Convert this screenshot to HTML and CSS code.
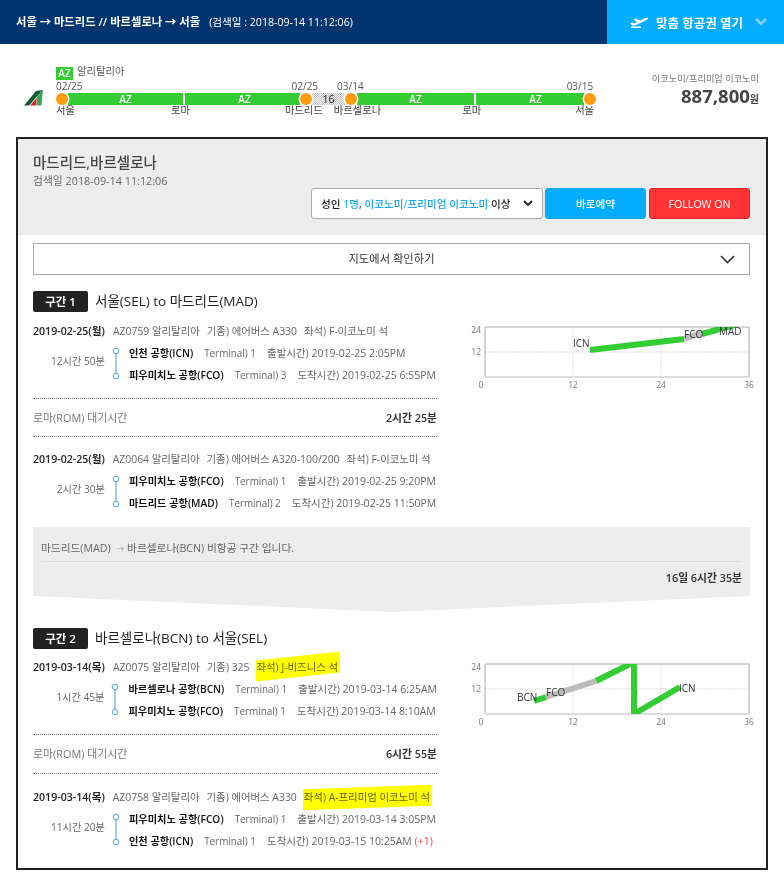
FILE: index.html
```html
<!DOCTYPE html>
<html lang="ko">
<head>
<meta charset="utf-8">
<title>항공권</title>
<link rel="stylesheet" href="styles.css">
</head>
<body>
<header class="topbar">
  <div class="route">서울 → 마드리드 // 바르셀로나 → 서울<span class="route-date">(검색일 : 2018-09-14 11:12:06)</span></div>
  <button class="open-btn">
    <svg class="plane" viewBox="0 0 18 11" width="18" height="11"><path fill="#fff" d="M0 6.5 2 5.6 4 6.4 7 5.2 3.6 2.2 5.2 1.6 10.4 3.6 14 1.6C15.5.9 17.3.4 18 .9 18.3 1.8 17 2.8 15.5 3.6L5.2 8.4 2.4 8.4ZM1 9.4H11V11H1Z"/></svg>
    <span>맞춤 항공권 열기</span>
    <svg class="chev" viewBox="0 0 12 8" width="12" height="8"><path fill="none" stroke="#7fd5ff" stroke-width="2.6" d="M1 1 6 6 11 1"/></svg>
  </button>
</header>

<section class="summary">
  <svg class="logo" viewBox="0 0 20 16" width="20" height="16">
    <polygon fill="#0f5c34" points="0,15.5 12,1 19,0 17,2 5,15.5"/>
    <polygon fill="#3aa655" points="13,7 19,0 17.4,15.5 12.6,15.5"/>
    <polygon fill="#d8262c" points="6,15.5 12.6,8 12.2,15.5"/>
  </svg>
  <div class="timeline">
    <div class="carrier"><span class="az-tag">AZ</span><span>알리탈리아</span></div>
    <div class="dates"><span class="d1">02/25</span><span class="d2">02/25</span><span class="d3">03/14</span><span class="d4">03/15</span></div>
    <div class="track">
      <span class="dot"></span>
      <span class="seg s1">AZ</span><span class="seg s2">AZ</span>
      <span class="dot"></span>
      <span class="stay">16</span>
      <span class="dot"></span>
      <span class="seg s3">AZ</span><span class="seg s4">AZ</span>
      <span class="dot"></span>
    </div>
    <div class="stations"><span class="st1">서울</span><span class="st2">로마</span><span class="st3">마드리드</span><span class="st4">바르셀로나</span><span class="st5">로마</span><span class="st6">서울</span></div>
  </div>
  <div class="price">
    <div class="cabin">이코노미/프리미엄 이코노미</div>
    <div class="amount">887,800<small>원</small></div>
  </div>
</section>

<main class="panel">
  <div class="panel-head">
    <h1>마드리드,바르셀로나</h1>
    <p class="search-date">검색일 2018-09-14 11:12:06</p>
    <div class="actions">
      <div class="select"><span>성인 <b class="blue">1명</b>, <b class="blue">이코노미/프리미엄 이코노미</b> 이상</span>
        <svg viewBox="0 0 10 7" width="10" height="7"><path fill="none" stroke="#222" stroke-width="1.8" d="M1 1 5 5 9 1"/></svg>
      </div>
      <button class="btn btn-blue">바로예약</button>
      <button class="btn btn-red">FOLLOW ON</button>
    </div>
  </div>

  <div class="panel-body">
    <div class="map-toggle"><span>지도에서 확인하기</span>
      <svg viewBox="0 0 15 9" width="15" height="9"><path fill="none" stroke="#333" stroke-width="1.6" d="M1 1 7.5 7.5 14 1"/></svg>
    </div>

    <h2 class="leg-title"><span class="badge">구간 1</span><span class="leg-name">서울(SEL) to 마드리드(MAD)</span></h2>
    <div class="leg">
      <div class="flights">
        <article class="flight">
          <div class="flight-line"><b>2019-02-25(월)</b><span class="meta">AZ0759 알리탈리아</span><span class="meta">기종) 에어버스 A330</span><span class="meta">좌석) F-이코노미 석</span></div>
          <div class="flight-body">
            <div class="dur">12시간 50분</div>
            <svg class="rail" viewBox="0 0 8 32" width="8" height="32"><path fill="none" stroke="#4aa8dc" stroke-width="1.1" d="M4 7V26"/><circle cx="4" cy="4" r="2.8" fill="#fff" stroke="#4aa8dc"/><circle cx="4" cy="29" r="2.8" fill="#fff" stroke="#4aa8dc"/></svg>
            <div class="stops">
              <div class="stop"><b>인천 공항(ICN)</b><span>Terminal) 1</span><span>출발시간) 2019-02-25 2:05PM</span></div>
              <div class="stop"><b>피우미치노 공항(FCO)</b><span>Terminal) 3</span><span>도착시간) 2019-02-25 6:55PM</span></div>
            </div>
          </div>
        </article>
        <div class="layover"><span>로마(ROM) 대기시간</span><b>2시간 25분</b></div>
        <article class="flight">
          <div class="flight-line"><b>2019-02-25(월)</b><span class="meta">AZ0064 알리탈리아</span><span class="meta">기종) 에어버스 A320-100/200</span><span class="meta">좌석) F-이코노미 석</span></div>
          <div class="flight-body">
            <div class="dur">2시간 30분</div>
            <svg class="rail" viewBox="0 0 8 32" width="8" height="32"><path fill="none" stroke="#4aa8dc" stroke-width="1.1" d="M4 7V26"/><circle cx="4" cy="4" r="2.8" fill="#fff" stroke="#4aa8dc"/><circle cx="4" cy="29" r="2.8" fill="#fff" stroke="#4aa8dc"/></svg>
            <div class="stops">
              <div class="stop"><b>피우미치노 공항(FCO)</b><span>Terminal) 1</span><span>출발시간) 2019-02-25 9:20PM</span></div>
              <div class="stop"><b>마드리드 공항(MAD)</b><span>Terminal) 2</span><span>도착시간) 2019-02-25 11:50PM</span></div>
            </div>
          </div>
        </article>
      </div>
      <svg class="chart" viewBox="0 0 295 80" width="295" height="80">
        <defs><clipPath id="plot1"><rect x="20" y="7" width="264" height="50"/></clipPath></defs>
        <g class="grid"><path d="M108 7V57M196 7V57M20 32H284"/></g>
        <path class="frame" d="M20 57V7H284V57"/><path class="axis" d="M20 57H284"/>
        <g clip-path="url(#plot1)"><path class="g" d="M125 30 219 19"/><path class="w" d="M219 19 237 13"/><path class="g" d="M237 14 258 8 270 5"/></g>
        <text class="lab" x="108" y="27">ICN</text><text class="lab" x="219" y="18">FCO</text><text class="lab" x="254" y="15">MAD</text>
        <text class="tick" x="16" y="13" text-anchor="end">24</text><text class="tick" x="16" y="35" text-anchor="end">12</text>
        <text class="tick" x="16" y="68" text-anchor="middle">0</text><text class="tick" x="108" y="68" text-anchor="middle">12</text><text class="tick" x="196" y="68" text-anchor="middle">24</text><text class="tick" x="284" y="68" text-anchor="middle">36</text>
      </svg>
    </div>

    <div class="transfer">
      <p class="transfer-note">마드리드(MAD) &nbsp;<span class="arrow">→</span> 바르셀로나(BCN) 비항공 구간 입니다.</p>
      <p class="transfer-time">16일 6시간 35분</p>
    </div>

    <h2 class="leg-title"><span class="badge">구간 2</span><span class="leg-name">바르셀로나(BCN) to 서울(SEL)</span></h2>
    <div class="leg leg-return">
      <div class="flights">
        <article class="flight">
          <div class="flight-line"><b>2019-03-14(목)</b><span class="meta">AZ0075 알리탈리아</span><span class="meta">기종) 325</span><span class="meta mark mark-a">좌석) J-비즈니스 석</span></div>
          <div class="flight-body">
            <div class="dur">1시간 45분</div>
            <svg class="rail" viewBox="0 0 8 32" width="8" height="32"><path fill="none" stroke="#4aa8dc" stroke-width="1.1" d="M4 7V26"/><circle cx="4" cy="4" r="2.8" fill="#fff" stroke="#4aa8dc"/><circle cx="4" cy="29" r="2.8" fill="#fff" stroke="#4aa8dc"/></svg>
            <div class="stops">
              <div class="stop"><b>바르셀로나 공항(BCN)</b><span>Terminal) 1</span><span>출발시간) 2019-03-14 6:25AM</span></div>
              <div class="stop"><b>피우미치노 공항(FCO)</b><span>Terminal) 1</span><span>도착시간) 2019-03-14 8:10AM</span></div>
            </div>
          </div>
        </article>
        <div class="layover"><span>로마(ROM) 대기시간</span><b>6시간 55분</b></div>
        <article class="flight">
          <div class="flight-line"><b>2019-03-14(목)</b><span class="meta">AZ0758 알리탈리아</span><span class="meta">기종) 에어버스 A330</span><span class="meta mark mark-b">좌석) A-프리미엄 이코노미 석</span></div>
          <div class="flight-body">
            <div class="dur">11시간 20분</div>
            <svg class="rail" viewBox="0 0 8 32" width="8" height="32"><path fill="none" stroke="#4aa8dc" stroke-width="1.1" d="M4 7V26"/><circle cx="4" cy="4" r="2.8" fill="#fff" stroke="#4aa8dc"/><circle cx="4" cy="29" r="2.8" fill="#fff" stroke="#4aa8dc"/></svg>
            <div class="stops">
              <div class="stop"><b>피우미치노 공항(FCO)</b><span>Terminal) 1</span><span>출발시간) 2019-03-14 3:05PM</span></div>
              <div class="stop"><b>인천 공항(ICN)</b><span>Terminal) 1</span><span>도착시간) 2019-03-15 10:25AM <em>(+1)</em></span></div>
            </div>
          </div>
        </article>
      </div>
      <svg class="chart" viewBox="0 0 295 80" width="295" height="80">
        <defs><clipPath id="plot2"><rect x="20" y="7" width="264" height="50"/></clipPath></defs>
        <g class="grid"><path d="M108 7V57M196 7V57M20 32H284"/></g>
        <path class="frame" d="M20 57V7H284V57"/><path class="axis" d="M20 57H284"/>
        <g clip-path="url(#plot2)"><path class="g" d="M69 44 81 40"/><path class="w" d="M81 40 131 24"/><path class="g" d="M131 24 169 5V57L215 30"/></g>
        <text class="lab" x="52" y="44">BCN</text><text class="lab" x="81" y="39">FCO</text><text class="lab" x="214" y="35">ICN</text>
        <text class="tick" x="16" y="13" text-anchor="end">24</text><text class="tick" x="16" y="35" text-anchor="end">12</text>
        <text class="tick" x="16" y="68" text-anchor="middle">0</text><text class="tick" x="108" y="68" text-anchor="middle">12</text><text class="tick" x="196" y="68" text-anchor="middle">24</text><text class="tick" x="284" y="68" text-anchor="middle">36</text>
      </svg>
    </div>
  </div>
</main>
</body>
</html>
```
FILE: styles.css
```css
* { box-sizing: border-box; }
html, body { margin: 0; padding: 0; }
body {
  width: 784px;
  height: 888px;
  overflow: hidden;
  background: #fff;
  color: #555;
  font: 10px/14px "Open Sans", "Noto Sans CJK KR", sans-serif;
}
p, h1, h2 { margin: 0; font-weight: 400; }
b { font-weight: 600; color: #222; }

.topbar {
  height: 44px;
  background: #00356f;
  display: flex;
  justify-content: space-between;
  align-items: center;
  padding-left: 16px;
  color: #fff;
}
.route { font-size: 11.3px; font-weight: 600; }
.route-date { font-size: 10.6px; font-weight: 400; margin-left: 9px; }
.open-btn {
  width: 177px;
  height: 44px;
  border: 0;
  background: #04adff;
  color: #fff;
  font: 600 12.5px "Open Sans", "Noto Sans CJK KR", sans-serif;
  display: flex;
  align-items: center;
  padding: 0 17px 0 23px;
}
.plane { margin-right: 8px; }
.chev { margin-left: auto; }

.summary {
  height: 93px;
  padding: 21px 25px 0 24px;
  display: flex;
}
.logo { margin: 25px 12px 0 0; flex: none; }
.timeline { width: 540px; font-size: 10.3px; line-height: 12px; color: #555; }
.carrier { display: flex; align-items: flex-start; gap: 4px; height: 15px; }
.az-tag { background: #33cc33; color: #fff; font-weight: 600; width: 17px; height: 13px; margin-top: 2px; line-height: 13px; text-align: center; font-size: 10px; }
.dates { display: flex; height: 12px; font-size: 10px; }
.d2 { margin-left: 209px; }
.d3 { margin-left: 19px; }
.d4 { margin-left: 203px; }
.track { display: flex; align-items: center; height: 13px; }
.dot {
  width: 12px; height: 12px;
  flex: none;
  border-radius: 50%;
  background: #ff9c12;
  box-shadow: 0 0 0 1.5px #fff;
  position: relative;
  z-index: 1;
}
.seg {
  height: 12px; line-height: 12px;
  background: #33cc33; color: #fff;
  font-weight: 600; font-size: 10px;
  text-align: center;
}
.s1 { width: 115px; margin-right: 2px; }
.s2 { width: 115px; padding-left: 4px; }
.s3 { width: 117px; margin-right: 2px; }
.s4 { width: 108px; padding-left: 11px; }
.stay {
  width: 33px; height: 12px; line-height: 12px;
  text-align: center; color: #222; font-size: 10.5px;
  background: repeating-conic-gradient(#c4c4c4 0 25%, #f2f2f2 0 50%) 0 0 / 2px 2px;
}
.stations { display: flex; height: 12px; font-size: 10.3px; line-height: 10px; color: #444; white-space: nowrap; }
.stations span { flex: none; }
.st2 { margin-left: 96px; }
.st3 { margin-left: 95px; }
.st4 { margin-left: 11px; }
.st5 { margin-left: 81px; }
.st6 { margin-left: 94px; }
.price { margin-left: auto; text-align: right; padding-top: 8px; white-space: nowrap; }
.cabin { font-size: 9.2px; line-height: 12px; color: #777; }
.amount { font-size: 18.5px; line-height: 22px; font-weight: 700; color: #444; }
.amount small { font-size: 10px; font-weight: 600; }

.panel {
  margin: 0 16px;
  width: 752px;
  height: 733px;
  border: 2px solid #222;
}
.panel-head {
  height: 96px;
  background: #ededed;
  padding: 15px 16px 0 15px;
}
h1 { font-size: 14.5px; line-height: 18px; color: #444; font-weight: 500; }
.search-date { font-size: 10.8px; line-height: 14px; color: #666; margin-top: 2px; }
.actions { display: flex; justify-content: flex-end; gap: 3px; height: 31px; }
.select {
  width: 232px;
  margin-right: -1px;
  background: #fff;
  border: 1px solid #aaa;
  border-radius: 3px;
  display: flex; align-items: center; justify-content: space-between;
  padding: 0 9px;
  font-size: 10.6px; color: #222; font-weight: 500;
  white-space: nowrap;
}
.blue { color: #18a8f0; font-weight: 500; }
.btn {
  width: 101px; height: 31px;
  border: 1px solid transparent; border-radius: 3px;
  color: #fff;
  font: 500 10.6px "Open Sans", "Noto Sans CJK KR", sans-serif;
}
.btn-blue { background: #04adff; border-color: #1aa3e8; }
.btn-red { background: #ff3333; border-color: #d9262c; }

.panel-body { padding: 8px 16px 0 15px; }
.map-toggle {
  height: 32px;
  border: 1px solid #aaa;
  display: flex; align-items: center; justify-content: center;
  position: relative;
  font-size: 11.3px; color: #333;
}
.map-toggle svg { position: absolute; right: 14px; top: 11px; }

.leg-title {
  display: flex; align-items: center;
  height: 21px;
  margin-top: 16px;
  font-size: 13.5px;
  color: #222;
}
.leg-name { padding-bottom: 2px; }
.badge {
  width: 55px; height: 21px; line-height: 21px;
  background: #222; color: #fff;
  border-radius: 2px;
  text-align: center;
  font-size: 11.5px; font-weight: 600;
  margin-right: 7px;
}
.leg { display: flex; }
.flights { width: 404px; flex: none; }
.chart { flex: none; margin: 8px 0 0 28px; overflow: visible; }

.flight { padding-top: 15px; }
.flight:first-child { padding-top: 12px; }
.leg-return .flight:first-child { padding-top: 11px; }
.leg-return .flight:last-child { padding-top: 16px; }
.flight-line { display: flex; height: 14px; line-height: 14px; font-size: 10.4px; color: #666; white-space: nowrap; }
.flight-line b { width: 72px; margin-right: 8px; font-size: 10.6px; }
.meta { margin-right: 7px; position: relative; }
.flight-body { display: flex; margin-top: 8px; }
.dur { width: 72px; text-align: right; align-self: center; font-size: 10.2px; color: #666; margin-top: -7px; }
.rail { margin: 1px 9px 0 7px; flex: none; }
.stops { flex: 1; display: flex; flex-direction: column; gap: 8px; }
.stop { display: flex; height: 14px; line-height: 14px; white-space: nowrap; font-size: 10.5px; color: #666; }
.stop b { margin-right: 11px; font-size: 10.2px; color: #111; }
.stop span:nth-child(2) { margin-right: 11px; font-size: 9.9px; }
em { font-style: normal; color: #f0453a; }

.layover {
  margin-top: 16px;
  height: 39px;
  border-top: 1px dotted #777;
  border-bottom: 1px dotted #777;
  display: flex; align-items: center; justify-content: space-between;
  color: #777;
  font-size: 10.9px;
}
.leg-return .layover { height: 40px; }
.layover b { color: #333; font-size: 10.8px; }

.mark::after {
  content: "";
  position: absolute;
  background: #ffff00;
  mix-blend-mode: multiply;
}
.mark-a::after { left: -1px; right: -1px; top: -4px; bottom: -3px; transform: skewY(-6deg); }
.mark-b::after { left: -1px; right: -1px; top: -3px; bottom: -4px; transform: skewY(-2deg); }

.transfer {
  margin-top: 17px;
  height: 85px;
  padding: 14px 8px 0;
  background: #ededed;
  clip-path: polygon(0 0, 100% 0, 100% 69px, 50% 85px, 0 69px);
  font-size: 10.7px;
  color: #666;
}
.transfer-note { height: 21px; line-height: 14px; border-bottom: 1px solid #ddd; }
.arrow { font-size: 8px; color: #999; }
.transfer-time { margin-top: 9px; text-align: right; font-weight: 600; color: #333; font-size: 10.8px; }

.grid path { fill: none; stroke: #ddd; stroke-width: 1; stroke-dasharray: 2 1; }
.frame { fill: none; stroke: #aaa; stroke-width: 1; }
.axis { fill: none; stroke: #ddd; stroke-width: 2; }
.g { fill: none; stroke: #33cc33; stroke-width: 6; }
.w { fill: none; stroke: #bbb; stroke-width: 6; }
.lab { font-size: 10px; fill: #333; }
.tick { font-size: 8.5px; fill: #777; }
```
